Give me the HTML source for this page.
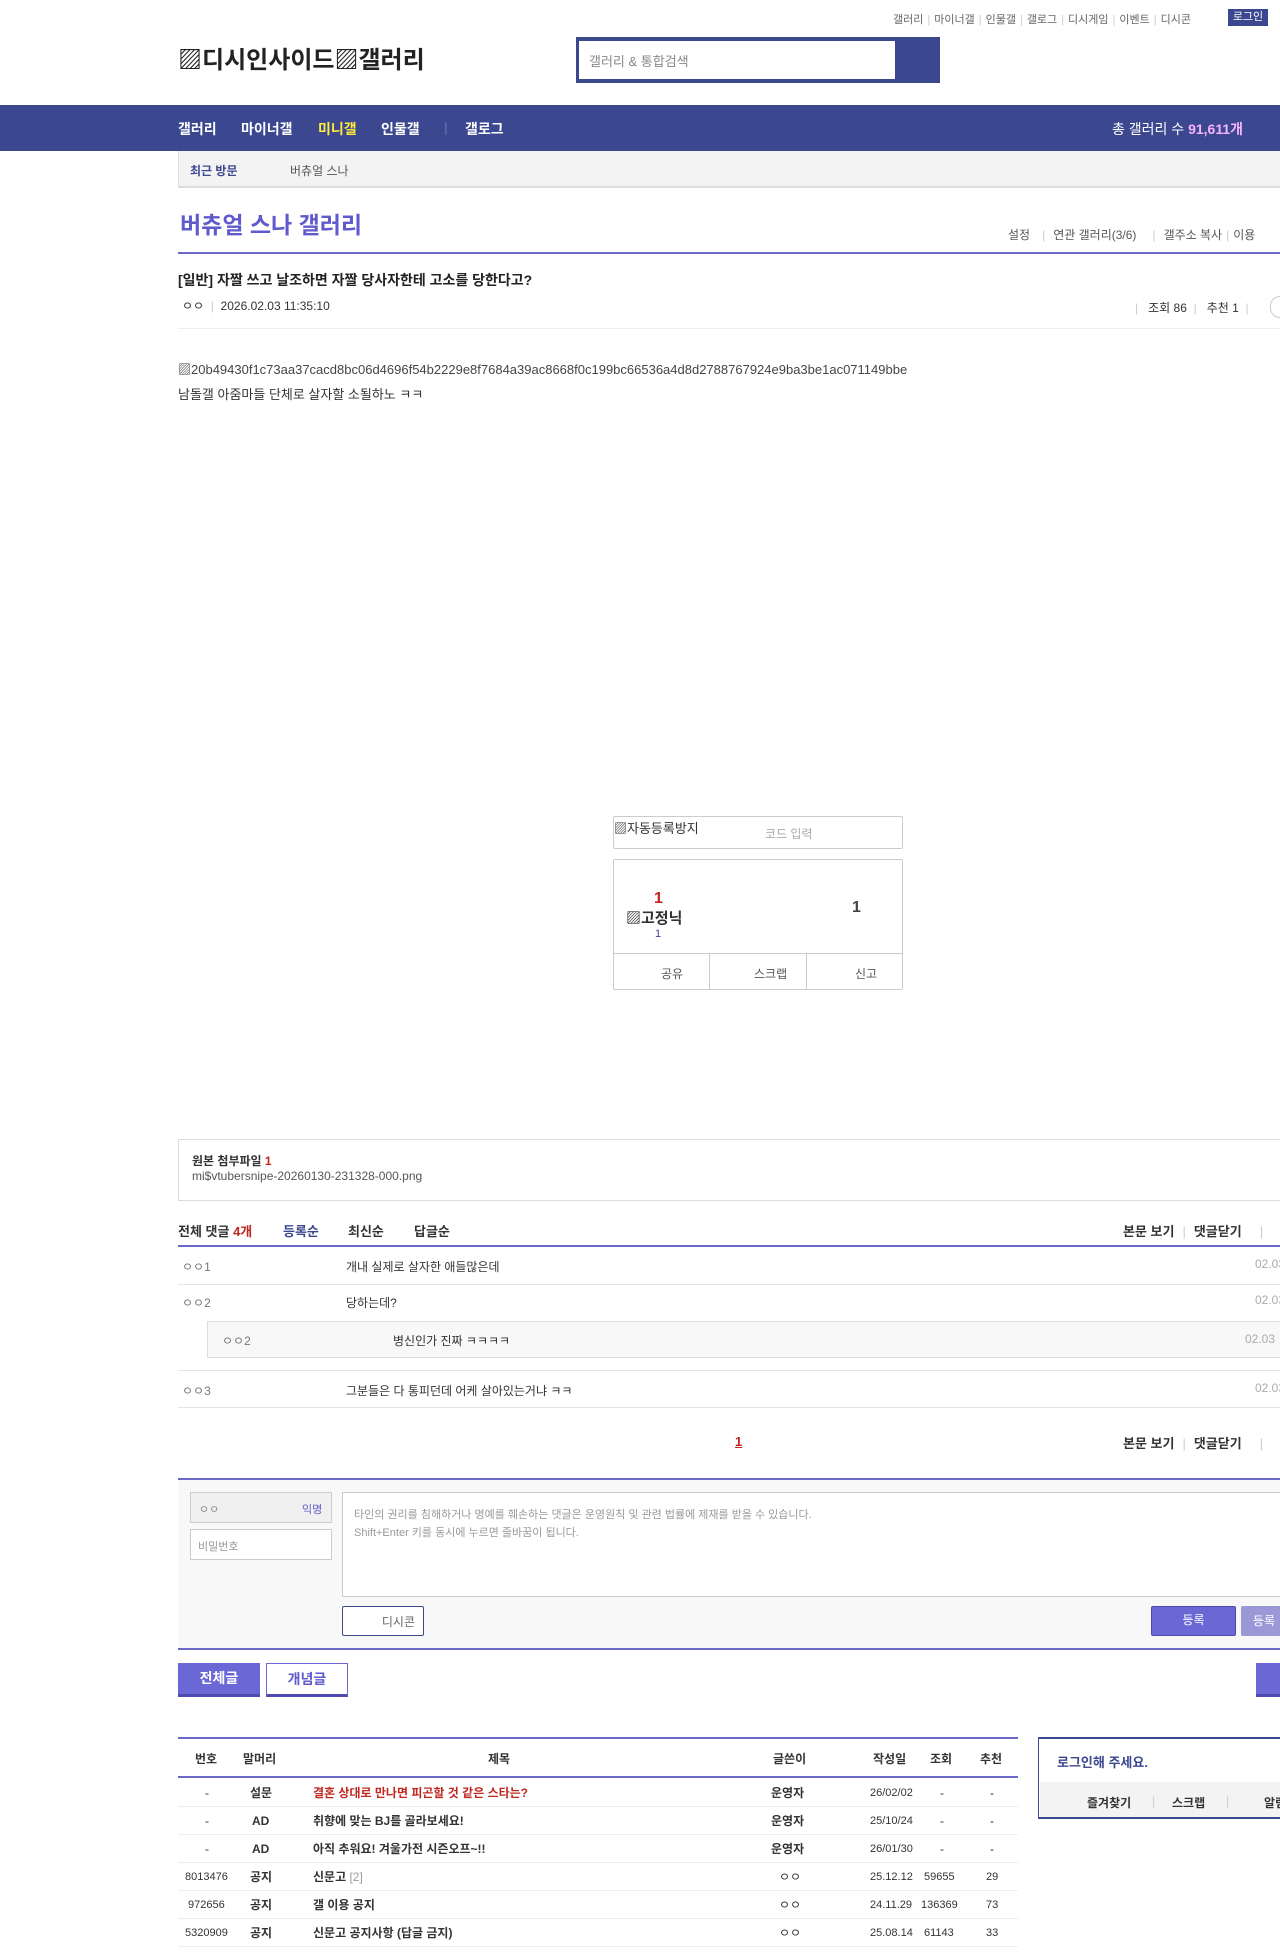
<!DOCTYPE html>
<html><head><meta charset="utf-8">
<style>
*{margin:0;padding:0;box-sizing:border-box}
body{width:1280px;height:1957px;position:relative;overflow:hidden;background:#fff;font-family:"Liberation Sans","Noto Sans CJK KR",sans-serif;font-size:12px;color:#333}
.a{position:absolute;white-space:nowrap}
.g{color:#777}
.hl{position:absolute;left:178px;right:0;height:1px;background:#e5e5e5}
.pl{position:absolute;left:178px;right:0;height:2px;background:#6b68c9}
.s{color:#ccc;margin:0 4px}
</style></head><body>
<!-- top links -->
<div class="a" style="left:893px;top:11px;font-size:11px;color:#666">갤러리<span class="s">|</span>마이너갤<span class="s">|</span>인물갤<span class="s">|</span>갤로그<span class="s">|</span>디시게임<span class="s">|</span>이벤트<span class="s">|</span>디시콘</div>
<div class="a" style="left:1228px;top:9px;width:40px;height:17px;background:#3b4890;color:#fff;font-size:11px;text-align:center;line-height:17px">로그인</div>
<div class="a" style="left:178px;top:40px;font-size:24px;color:#222;font-weight:bold">▨디시인사이드▨갤러리</div>
<div class="a" style="left:576px;top:37px;width:364px;height:46px;background:#3b4890"></div>
<div class="a" style="left:579px;top:41px;width:316px;height:38px;background:#fff;color:#888;font-size:13px;padding:10px 10px">갤러리 &amp; 통합검색</div>
<!-- nav -->
<div class="a" style="left:0;top:105px;width:1280px;height:46px;background:#3b4890"></div>
<div class="a" style="left:178px;top:119px;color:#fff;font-size:14px;font-weight:bold">갤러리</div>
<div class="a" style="left:241px;top:119px;color:#fff;font-size:14px;font-weight:bold">마이너갤</div>
<div class="a" style="left:318px;top:119px;color:#ffeb3b;font-size:14px;font-weight:bold">미니갤</div>
<div class="a" style="left:381px;top:119px;color:#fff;font-size:14px;font-weight:bold">인물갤</div>
<div class="a" style="left:444px;top:119px;color:#6a75b0;font-size:14px">|</div>
<div class="a" style="left:465px;top:119px;color:#fff;font-size:14px;font-weight:bold">갤로그</div>
<div class="a" style="left:1112px;top:119px;color:#fff;font-size:14px">총 갤러리 수 <b style="color:#f9b3ff">91,611개</b></div>
<div class="a" style="left:178px;top:151px;width:1102px;height:37px;background:#f3f3f3;border-bottom:2px solid #ddd;border-left:1px solid #ddd"></div>
<div class="a" style="left:190px;top:162px;font-size:12px;color:#3b4890;font-weight:bold">최근 방문</div>
<div class="a" style="left:290px;top:162px;font-size:12px;color:#555">버츄얼 스나</div>
<div class="a" style="left:180px;top:206px;font-size:23px;color:#5f5bcd;font-weight:bold">버츄얼 스나 갤러리</div>
<div class="a" style="left:1008px;top:226px;font-size:12px;color:#555">설정<span class="s" style="margin:0 8px 0 12px">|</span>연관 갤러리(3/6)<span class="s" style="margin:0 8px 0 16px">|</span>갤주소 복사<span class="s">|</span>이용</div>
<div class="pl" style="top:252px"></div>
<div class="a" style="left:178px;top:270px;font-size:14px;font-weight:bold;color:#222">[일반] 자짤 쓰고 날조하면 자짤 당사자한테 고소를 당한다고?</div>
<div class="a" style="left:182px;top:297px;font-size:12px;color:#333">ㅇㅇ <span style="color:#ccc">&nbsp;|&nbsp;</span> 2026.02.03 11:35:10</div>
<div class="a" style="left:1135px;top:299px;font-size:12px;color:#333"><span style="color:#ccc">|</span>&nbsp;&nbsp; 조회 86 &nbsp;<span style="color:#ccc">|</span>&nbsp;&nbsp; 추천 1 &nbsp;<span style="color:#ccc">|</span></div>
<div class="a" style="left:1270px;top:296px;width:20px;height:22px;border:1px solid #ccc;border-radius:11px"></div>
<div class="hl" style="top:328px;background:#eee"></div>
<div class="a" style="left:178px;top:359px;font-size:13px;color:#444">▨20b49430f1c73aa37cacd8bc06d4696f54b2229e8f7684a39ac8668f0c199bc66536a4d8d2788767924e9ba3be1ac071149bbe</div>
<div class="a" style="left:178px;top:384px;font-size:13px;color:#333">남돌갤 아줌마들 단체로 살자할 소될하노 ㅋㅋ</div>
<!-- captcha -->
<div class="a" style="left:613px;top:816px;width:290px;height:33px;border:1px solid #ccc;border-radius:2px"></div>
<div class="a" style="left:614px;top:818px;font-size:13px;color:#333">▨자동등록방지</div>
<div class="a" style="left:765px;top:825px;font-size:12px;color:#aaa">코드 입력</div>
<div class="a" style="left:613px;top:859px;width:290px;height:131px;border:1px solid #ccc;border-radius:2px"></div>
<div class="a" style="left:613px;top:953px;width:290px;height:1px;background:#ccc"></div>
<div class="a" style="left:709px;top:953px;width:1px;height:37px;background:#ccc"></div>
<div class="a" style="left:806px;top:953px;width:1px;height:37px;background:#ccc"></div>
<div class="a" style="left:654px;top:890px;font-size:16px;font-weight:bold;color:#c1261e">1</div>
<div class="a" style="left:626px;top:907px;font-size:15px;font-weight:bold;color:#333">▨고정닉</div>
<div class="a" style="left:655px;top:928px;font-size:11px;color:#3b4890">1</div>
<div class="a" style="left:852px;top:899px;font-size:16px;font-weight:bold;color:#444">1</div>
<div class="a" style="left:661px;top:965px;font-size:12px;color:#555">공유</div>
<div class="a" style="left:754px;top:965px;font-size:12px;color:#555">스크랩</div>
<div class="a" style="left:855px;top:965px;font-size:12px;color:#555">신고</div>
<!-- attachment -->
<div class="a" style="left:178px;top:1139px;width:1110px;height:62px;border:1px solid #ddd"></div>
<div class="a" style="left:192px;top:1152px;font-size:12px;font-weight:bold;color:#333">원본 첨부파일 <span style="color:#c1261e">1</span></div>
<div class="a" style="left:192px;top:1169px;font-size:12px;color:#555">mi$vtubersnipe-20260130-231328-000.png</div>
<!-- comments -->
<div class="a" style="left:178px;top:1221px;font-size:13px;font-weight:bold;color:#333">전체 댓글 <span style="color:#c1261e">4개</span></div>
<div class="a" style="left:283px;top:1221px;font-size:13px;font-weight:bold;color:#3b4890">등록순</div>
<div class="a" style="left:348px;top:1221px;font-size:13px;font-weight:bold;color:#333">최신순</div>
<div class="a" style="left:414px;top:1221px;font-size:13px;font-weight:bold;color:#333">답글순</div>
<div class="a" style="left:1123px;top:1221px;font-size:13px;font-weight:bold;color:#333">본문 보기<span class="s" style="font-weight:normal;margin:0 8px">|</span>댓글닫기<span class="s" style="font-weight:normal;margin:0 0 0 18px">|</span></div>
<div class="pl" style="top:1245px"></div>
<div class="a g" style="left:182px;top:1258px">ㅇㅇ1</div><div class="a" style="left:346px;top:1258px">개내 실제로 살자한 애들많은데</div><div class="a" style="left:1255px;top:1257px;color:#aaa">02.03</div>
<div class="hl" style="top:1284px"></div>
<div class="a g" style="left:182px;top:1294px">ㅇㅇ2</div><div class="a" style="left:346px;top:1294px">당하는데?</div><div class="a" style="left:1255px;top:1293px;color:#aaa">02.03</div>
<div class="a" style="left:207px;top:1321px;width:1080px;height:37px;background:#f8f8f8;border:1px solid #ddd"></div>
<div class="a g" style="left:222px;top:1332px">ㅇㅇ2</div><div class="a" style="left:393px;top:1332px">병신인가 진짜 ㅋㅋㅋㅋ</div><div class="a" style="left:1245px;top:1332px;color:#aaa">02.03</div>
<div class="hl" style="top:1370px"></div>
<div class="a g" style="left:182px;top:1382px">ㅇㅇ3</div><div class="a" style="left:346px;top:1382px">그분들은 다 통피던데 어케 살아있는거냐 ㅋㅋ</div><div class="a" style="left:1255px;top:1381px;color:#aaa">02.03</div>
<div class="hl" style="top:1407px"></div>
<div class="a" style="left:735px;top:1434px;font-size:13px;font-weight:bold;color:#c1261e;text-decoration:underline">1</div>
<div class="a" style="left:1123px;top:1433px;font-size:13px;font-weight:bold;color:#333">본문 보기<span class="s" style="font-weight:normal;margin:0 8px">|</span>댓글닫기<span class="s" style="font-weight:normal;margin:0 0 0 18px">|</span></div>
<!-- form -->
<div class="a" style="left:178px;top:1478px;width:1102px;height:172px;background:#f8f8f8;border-top:2px solid #6b68c9;border-bottom:2px solid #6b68c9"></div>
<div class="a" style="left:190px;top:1492px;width:142px;height:31px;background:#f0f0f0;border:1px solid #ccc"></div>
<div class="a" style="left:199px;top:1501px;font-size:11px;color:#888">ㅇㅇ</div>
<div class="a" style="left:302px;top:1501px;font-size:11px;color:#5f5bcd">익명</div>
<div class="a" style="left:190px;top:1529px;width:142px;height:31px;background:#fff;border:1px solid #ccc"></div>
<div class="a" style="left:198px;top:1538px;font-size:11px;color:#999">비밀번호</div>
<div class="a" style="left:342px;top:1492px;width:950px;height:105px;background:#fff;border:1px solid #ccc"></div>
<div class="a" style="left:354px;top:1506px;font-size:11px;color:#999;line-height:18px">타인의 권리를 침해하거나 명예를 훼손하는 댓글은 운영원칙 및 관련 법률에 제재를 받을 수 있습니다.<br>Shift+Enter 키를 동시에 누르면 줄바꿈이 됩니다.</div>
<div class="a" style="left:342px;top:1606px;width:82px;height:30px;background:#fff;border:1px solid #3b4890;border-radius:2px;font-size:12px;color:#666;text-align:right;padding:6px 8px">디시콘</div>
<div class="a" style="left:1151px;top:1606px;width:85px;height:30px;background:#6b68d6;border:1px solid #4d4ab0;border-radius:2px;color:#fff;font-size:12px;text-align:center;line-height:26px">등록</div>
<div class="a" style="left:1241px;top:1606px;width:60px;height:30px;background:#9a98d6;border-radius:2px;color:#fff;font-size:12px;padding:6px 12px">등록</div>
<div class="a" style="left:178px;top:1663px;width:82px;height:34px;background:#6b68d6;border-bottom:3px solid #4d4ab0;color:#fff;font-size:14px;font-weight:bold;text-align:center;line-height:30px">전체글</div>
<div class="a" style="left:266px;top:1663px;width:82px;height:34px;background:#fff;border:1px solid #6b68d6;border-bottom:3px solid #4d4ab0;color:#5f5bcd;font-size:14px;font-weight:bold;text-align:center;line-height:30px">개념글</div>
<div class="a" style="left:1256px;top:1663px;width:40px;height:34px;background:#6b68d6;border-bottom:3px solid #4d4ab0"></div>
<!-- list -->
<div class="a" style="left:178px;top:1737px;width:840px;height:2px;background:#6b68c9"></div>
<div class="a" style="left:178px;top:1750px;width:840px;font-size:12px;font-weight:bold;color:#333">
<span class="a" style="left:17px">번호</span><span class="a" style="left:65px">말머리</span><span class="a" style="left:310px">제목</span><span class="a" style="left:595px">글쓴이</span><span class="a" style="left:695px">작성일</span><span class="a" style="left:752px">조회</span><span class="a" style="left:802px">추천</span></div>
<div class="a" style="left:178px;top:1776px;width:840px;height:2px;background:#6b68c9"></div>
<div class="a" style="left:178px;top:1779px;width:840px;font-size:12px;color:#333;line-height:28px">
<div style="position:relative;height:28px;border-bottom:1px solid #eee"><span class="a" style="left:27px">-</span><span class="a" style="left:72px;font-weight:bold">설문</span><span class="a" style="left:135px;font-weight:bold;color:#c1261e">결혼 상대로 만나면 피곤할 것 같은 스타는?</span><span class="a" style="left:593px;font-weight:bold">운영자</span><span class="a" style="left:692px;font-size:11px">26/02/02</span><span class="a" style="left:762px">-</span><span class="a" style="left:812px">-</span></div>
<div style="position:relative;height:28px;border-bottom:1px solid #eee"><span class="a" style="left:27px">-</span><span class="a" style="left:74px;font-weight:bold">AD</span><span class="a" style="left:135px;font-weight:bold">취향에 맞는 BJ를 골라보세요!</span><span class="a" style="left:593px;font-weight:bold">운영자</span><span class="a" style="left:692px;font-size:11px">25/10/24</span><span class="a" style="left:762px">-</span><span class="a" style="left:812px">-</span></div>
<div style="position:relative;height:28px;border-bottom:1px solid #eee"><span class="a" style="left:27px">-</span><span class="a" style="left:74px;font-weight:bold">AD</span><span class="a" style="left:135px;font-weight:bold">아직 추워요! 겨울가전 시즌오프~!!</span><span class="a" style="left:593px;font-weight:bold">운영자</span><span class="a" style="left:692px;font-size:11px">26/01/30</span><span class="a" style="left:762px">-</span><span class="a" style="left:812px">-</span></div>
<div style="position:relative;height:28px;border-bottom:1px solid #eee"><span class="a" style="left:7px;font-size:11px">8013476</span><span class="a" style="left:72px;font-weight:bold">공지</span><span class="a" style="left:135px;font-weight:bold">신문고 <span style="color:#999;font-weight:normal">[2]</span></span><span class="a" style="left:601px">ㅇㅇ</span><span class="a" style="left:692px;font-size:11px">25.12.12</span><span class="a" style="left:746px;font-size:11px">59655</span><span class="a" style="left:808px;font-size:11px">29</span></div>
<div style="position:relative;height:28px;border-bottom:1px solid #eee"><span class="a" style="left:10px;font-size:11px">972656</span><span class="a" style="left:72px;font-weight:bold">공지</span><span class="a" style="left:135px;font-weight:bold">갤 이용 공지</span><span class="a" style="left:601px">ㅇㅇ</span><span class="a" style="left:692px;font-size:11px">24.11.29</span><span class="a" style="left:743px;font-size:11px">136369</span><span class="a" style="left:808px;font-size:11px">73</span></div>
<div style="position:relative;height:28px;border-bottom:1px solid #eee"><span class="a" style="left:7px;font-size:11px">5320909</span><span class="a" style="left:72px;font-weight:bold">공지</span><span class="a" style="left:135px;font-weight:bold">신문고 공지사항 (답글 금지)</span><span class="a" style="left:601px">ㅇㅇ</span><span class="a" style="left:692px;font-size:11px">25.08.14</span><span class="a" style="left:746px;font-size:11px">61143</span><span class="a" style="left:808px;font-size:11px">33</span></div>
</div>
<!-- login box -->
<div class="a" style="left:1038px;top:1737px;width:260px;height:82px;border:2px solid #3b4890;border-left:1px solid #3b4890;background:#fff"></div>
<div class="a" style="left:1040px;top:1782px;width:250px;height:35px;background:#f3f3f3"></div>
<div class="a" style="left:1057px;top:1752px;font-size:13px;font-weight:bold;color:#3b4890">로그인해 주세요.</div>
<div class="a" style="left:1087px;top:1794px;font-size:12px;font-weight:bold;color:#333">즐겨찾기</div>
<div class="a" style="left:1152px;top:1794px;font-size:12px;color:#ccc">|</div>
<div class="a" style="left:1172px;top:1794px;font-size:12px;font-weight:bold;color:#333">스크랩</div>
<div class="a" style="left:1226px;top:1794px;font-size:12px;color:#ccc">|</div>
<div class="a" style="left:1264px;top:1794px;font-size:12px;font-weight:bold;color:#333">알림</div>
</body></html>
